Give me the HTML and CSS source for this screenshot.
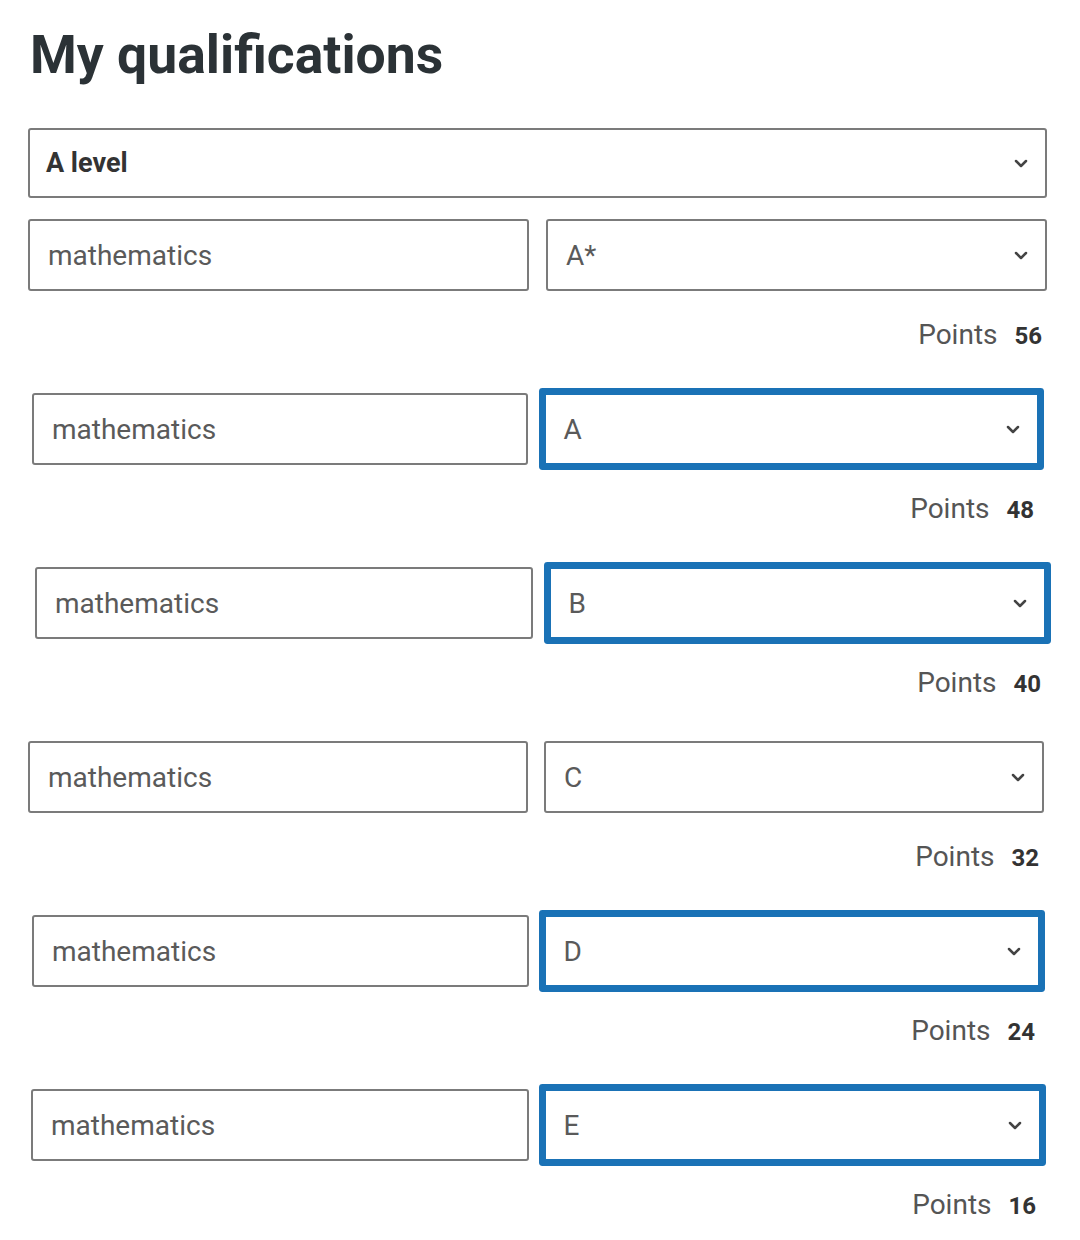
FILE: index.html
```html
<!DOCTYPE html>
<html lang="en">
<head>
<meta charset="utf-8">
<title>My qualifications</title>
<link rel="stylesheet" href="styles.css">
</head>
<body>
<main class="page">
  <h1 class="title">My qualifications</h1>

  <div class="field select qual-type">
    <span class="value">A level</span>
    <svg class="chev" viewBox="0 0 14 9" width="14" height="9"><path d="M2 2 L7 7 L12 2" fill="none" stroke="#444" stroke-width="2.5" stroke-linecap="round" stroke-linejoin="round"/></svg>
  </div>

  <section class="group g1">
    <div class="row">
      <div class="field text"><span class="value">mathematics</span></div>
      <div class="field select"><span class="value">A*</span>
        <svg class="chev" viewBox="0 0 14 9" width="14" height="9"><path d="M2 2 L7 7 L12 2" fill="none" stroke="#444" stroke-width="2.5" stroke-linecap="round" stroke-linejoin="round"/></svg>
      </div>
    </div>
    <p class="points">Points <b>56</b></p>
  </section>

  <section class="group g2">
    <div class="row">
      <div class="field text"><span class="value">mathematics</span></div>
      <div class="field select focus"><span class="value">A</span>
        <svg class="chev" viewBox="0 0 14 9" width="14" height="9"><path d="M2 2 L7 7 L12 2" fill="none" stroke="#444" stroke-width="2.5" stroke-linecap="round" stroke-linejoin="round"/></svg>
      </div>
    </div>
    <p class="points">Points <b>48</b></p>
  </section>

  <section class="group g3">
    <div class="row">
      <div class="field text"><span class="value">mathematics</span></div>
      <div class="field select focus"><span class="value">B</span>
        <svg class="chev" viewBox="0 0 14 9" width="14" height="9"><path d="M2 2 L7 7 L12 2" fill="none" stroke="#444" stroke-width="2.5" stroke-linecap="round" stroke-linejoin="round"/></svg>
      </div>
    </div>
    <p class="points">Points <b>40</b></p>
  </section>

  <section class="group g4">
    <div class="row">
      <div class="field text"><span class="value">mathematics</span></div>
      <div class="field select"><span class="value">C</span>
        <svg class="chev" viewBox="0 0 14 9" width="14" height="9"><path d="M2 2 L7 7 L12 2" fill="none" stroke="#444" stroke-width="2.5" stroke-linecap="round" stroke-linejoin="round"/></svg>
      </div>
    </div>
    <p class="points">Points <b>32</b></p>
  </section>

  <section class="group g5">
    <div class="row">
      <div class="field text"><span class="value">mathematics</span></div>
      <div class="field select focus"><span class="value">D</span>
        <svg class="chev" viewBox="0 0 14 9" width="14" height="9"><path d="M2 2 L7 7 L12 2" fill="none" stroke="#444" stroke-width="2.5" stroke-linecap="round" stroke-linejoin="round"/></svg>
      </div>
    </div>
    <p class="points">Points <b>24</b></p>
  </section>

  <section class="group g6">
    <div class="row">
      <div class="field text"><span class="value">mathematics</span></div>
      <div class="field select focus"><span class="value">E</span>
        <svg class="chev" viewBox="0 0 14 9" width="14" height="9"><path d="M2 2 L7 7 L12 2" fill="none" stroke="#444" stroke-width="2.5" stroke-linecap="round" stroke-linejoin="round"/></svg>
      </div>
    </div>
    <p class="points">Points <b>16</b></p>
  </section>
</main>
</body>
</html>
```

FILE: styles.css
```css
* { box-sizing: border-box; }

html, body {
  margin: 0;
  background: #ffffff;
}

body {
  font-family: Roboto, "Liberation Sans", Arial, sans-serif;
  color: #555555;
}

.page {
  width: 1080px;
  padding: 28px 33px 0 28px;
}

.title {
  margin: 0 0 47px 2px;
  font-size: 53.5px;
  line-height: 53px;
  font-weight: 700;
  color: #2b3236;
}

.field {
  display: flex;
  align-items: center;
  height: 72px;
  padding: 0 18px;
  border: 2px solid #7b7b7b;
  border-radius: 3px;
  background: #fff;
  font-size: 28px;
  font-weight: 400;
  color: #5a5a5a;
}

.field .value {
  flex: 1;
  white-space: nowrap;
}

.select .chev {
  flex: none;
  margin-right: -1px;
}

.qual-type {
  height: 70px;
  margin-bottom: 21px;
  padding-left: 16px;
}

.qual-type .value {
  font-weight: 700;
  font-size: 27px;
  color: #333;
}

.focus {
  border-color: #1a72b6;
  box-shadow: 0 0 0 5px #1a72b6;
  border-radius: 1px;
}

.group {
  padding-bottom: 43px;
}

.row {
  display: grid;
  grid-template-columns: 1fr 1fr;
  gap: 17px;
}

.points {
  margin: 29px 0 0;
  padding-right: 5px;
  height: 30px;
  line-height: 30px;
  text-align: right;
  font-size: 28px;
  color: #555;
}

.points b {
  margin-left: 10px;
  font-size: 24px;
  font-weight: 700;
  color: #333;
}

/* slight per-row offsets */
.g2 { padding-left: 4px; padding-right: 8px; }
.g2 .row { gap: 16px; }
.g3 { padding-left: 7px; padding-right: 1px; }
.g3 .row { gap: 16px; }
.g4 { padding-right: 3px; }
.g4 .row { gap: 16px; }
.g5 { padding-left: 4px; padding-right: 7px; }
.g5 .row { gap: 15px; }
.g6 { padding-left: 3px; padding-right: 6px; }
.g6 .row { gap: 15px; }
```
